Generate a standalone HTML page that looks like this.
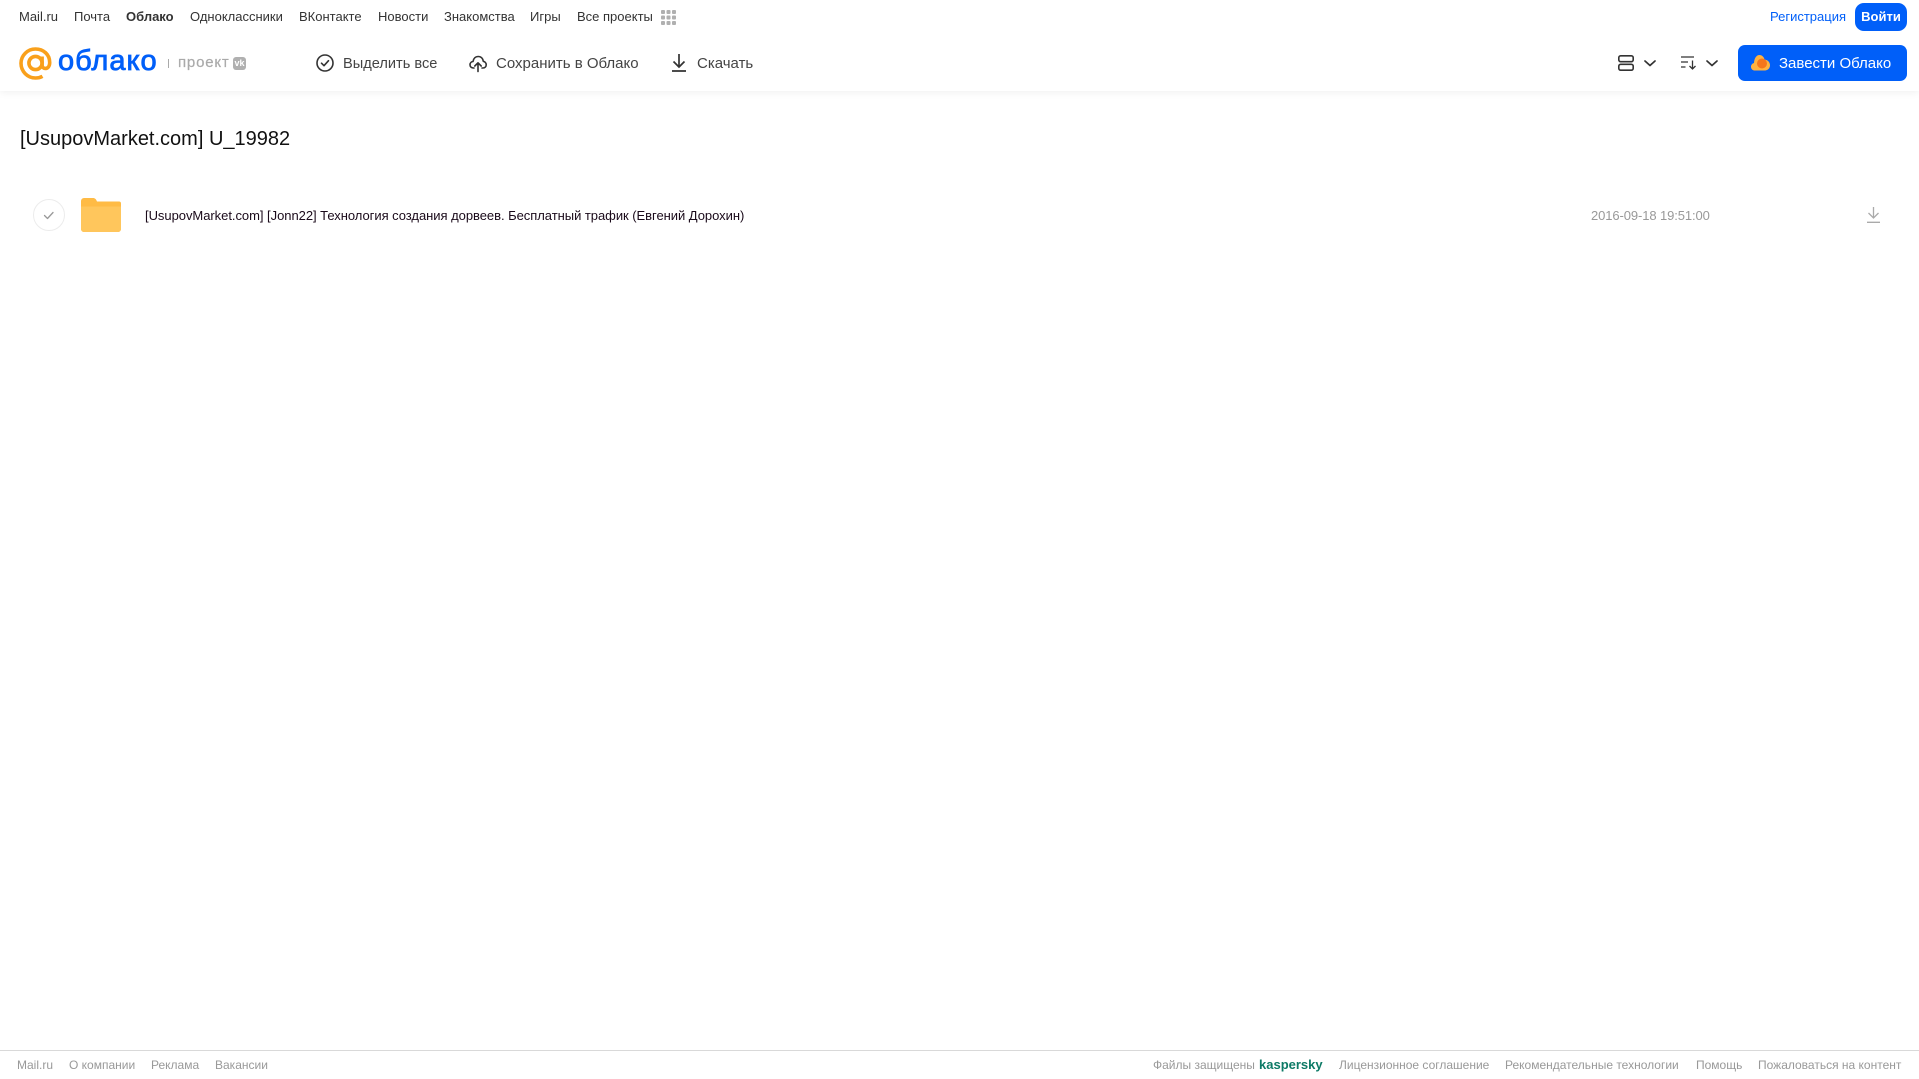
<!DOCTYPE html>
<html lang="ru"><head><meta charset="utf-8"><title>Облако</title>
<style>
html,body{margin:0;padding:0;background:#fff}
body{width:1919px;height:1079px;position:relative;overflow:hidden;font-family:"Liberation Sans",Arial,sans-serif}
.t{position:absolute;white-space:nowrap;line-height:20px;height:20px}
.n{top:7px;font-size:13px;color:#333}
.b{top:54px;font-size:15px;color:#444}
.f{top:1055px;font-size:12px;color:#999}
svg{position:absolute;display:block;overflow:visible}
#hdr{position:absolute;left:0;top:0;width:1919px;height:91px;background:#fff;box-shadow:0 1px 8px rgba(0,0,0,.07)}
#foot{position:absolute;left:0;top:1050px;width:1919px;height:1px;background:#d9d9d9}
</style></head><body>
<div id="hdr"></div>
<span class="t n" style="left:19px">Mail.ru</span>
<span class="t n" style="left:74px">Почта</span>
<span class="t n" style="left:126px;font-weight:bold">Облако</span>
<span class="t n" style="left:190px">Одноклассники</span>
<span class="t n" style="left:299px">ВКонтакте</span>
<span class="t n" style="left:378px">Новости</span>
<span class="t n" style="left:444px">Знакомства</span>
<span class="t n" style="left:530px">Игры</span>
<span class="t n" style="left:577px">Все проекты</span>
<svg style="left:661px;top:10px" width="15" height="15" fill="#b0b0b0"><rect width="4" height="4" rx="1"/><rect x="5.500" width="4" height="4" rx="1"/><rect x="11" width="4" height="4" rx="1"/><rect y="5.500" width="4" height="4" rx="1"/><rect x="5.500" y="5.500" width="4" height="4" rx="1"/><rect x="11" y="5.500" width="4" height="4" rx="1"/><rect y="11" width="4" height="4" rx="1"/><rect x="5.500" y="11" width="4" height="4" rx="1"/><rect x="11" y="11" width="4" height="4" rx="1"/></svg>
<span class="t n" style="left:1770px;color:#005ff9">Регистрация</span>
<div style="position:absolute;left:1855px;top:3px;width:52px;height:28px;border-radius:9px;background:#005ff9;color:#fff;font-size:13px;font-weight:bold;line-height:28px;text-align:center">Войти</div>

<svg style="left:19px;top:47px" width="33" height="33" viewBox="0 0 33 33" fill="none" stroke="#f9a01b" stroke-width="3.600"><circle cx="16.500" cy="16" r="6.600"/><path d="M23.100 9.500v8.500c0 5 7.600 5 7.600-2.500C30.700 7.500 24.500 2 16.500 2 8.500 2 2 8.500 2 16.300 2 24.500 8.500 31 16.500 31c2.800 0 5-.6 7-1.700"/></svg>
<span class="t" style="left:58px;top:43px;height:36px;line-height:36px;font-size:29px;color:#005ff9;letter-spacing:1px;-webkit-text-stroke:.8px #005ff9">облако</span>
<div style="position:absolute;left:168px;top:59px;width:1px;height:9px;background:#aaa"></div>
<span class="t" style="left:178px;top:53px;font-size:15px;color:#aaa;letter-spacing:.8px;-webkit-text-stroke:.2px #aaa">проект</span>
<div style="position:absolute;left:233px;top:57px;width:13px;height:13px;border-radius:3px;background:#b0b0b0;color:#fff;font-size:9px;font-weight:bold;line-height:13px;text-align:center">vk</div>

<svg style="left:316px;top:54px" width="18" height="18" fill="none" stroke="#333" stroke-width="1.600"><circle cx="9" cy="9" r="8"/><path d="M5.500 9.200l2.500 2.500 4.500-5" stroke-linecap="round" stroke-linejoin="round"/></svg>
<span class="t b" style="left:343px;font-size:14.600px">Выделить все</span>
<svg style="left:469px;top:54px" width="18" height="18" fill="none" stroke="#333" stroke-width="1.600" stroke-linecap="round" stroke-linejoin="round"><path d="M5 14H4.500C2.300 14 1 12.500 1 10.800 1 9 2.300 7.700 4 7.500 4.500 4.500 6.500 2.500 9.300 2.500c2.700 0 4.700 2 5 4.800 1.700.3 2.900 1.700 2.900 3.500 0 1.800-1.300 3.200-3.200 3.200H13"/><path d="M9 17.500V9M5.800 12L9 8.800l3.200 3.200"/></svg>
<span class="t b" style="left:496px">Сохранить в Облако</span>
<svg style="left:672px;top:54px" width="14" height="18" fill="none" stroke="#333" stroke-width="1.700"><path d="M7 0v12.500M1.500 7.500L7 13l5.500-5.500M0 17h14"/></svg>
<span class="t b" style="left:697px">Скачать</span>

<svg style="left:1618px;top:55px" width="16" height="16" fill="none" stroke="#333" stroke-width="1.600"><rect x=".8" y=".8" width="14.400" height="5.900" rx="1.800"/><rect x=".8" y="9.300" width="14.400" height="5.900" rx="1.800"/></svg>
<svg style="left:1644px;top:60px" width="12" height="7" fill="none" stroke="#333" stroke-width="1.700" stroke-linecap="round" stroke-linejoin="round"><path d="M1 1l5 4.500L11 1"/></svg>
<svg style="left:1681px;top:56px" width="16" height="14" fill="none" stroke="#333" stroke-width="1.300"><path d="M0 1h13M0 6h7M0 11h4.500M11.500 4.500V13M8.500 10l3 3 3-3"/></svg>
<svg style="left:1706px;top:60px" width="12" height="7" fill="none" stroke="#333" stroke-width="1.700" stroke-linecap="round" stroke-linejoin="round"><path d="M1 1l5 4.500L11 1"/></svg>
<div style="position:absolute;left:1738px;top:45px;width:169px;height:36px;border-radius:7px;background:#005ff9"></div>
<svg style="left:1751px;top:54px" width="19" height="17"><path d="M4 16.500C1.500 16.500 0 14.800 0 12.700 0 10.800 1.200 9.500 3 9 3.300 4 5.500 1 8.500 1c2.500 0 4.500 2 5 4.500 3 .3 5.500 2.500 5.500 5.800 0 3-2.300 5.200-5 5.200z" fill="#ffb23f"/><circle cx="11" cy="9.500" r="5" fill="#f5761c"/></svg>
<span class="t b" style="left:1779px;color:#fff">Завести Облако</span>

<span class="t" style="left:20px;top:127px;height:24px;line-height:24px;font-size:20px;color:#111">[UsupovMarket.com] U_19982</span>

<svg style="left:33px;top:199px" width="32" height="32" fill="none"><circle cx="16" cy="16" r="15.500" stroke="#ececec"/><path d="M11.500 16.500l3 3 5.500-6" stroke="#999" stroke-width="1.300" stroke-linecap="round" stroke-linejoin="round"/></svg>
<svg style="left:81px;top:198px" width="40" height="34"><path d="M0 3a3 3 0 0 1 3-3h9c2 0 3 1 4 3.500H38a2 2 0 0 1 2 2V31a3 3 0 0 1-3 3H3a3 3 0 0 1-3-3z" fill="#ffbb45"/><path d="M0 8.500H40V31a3 3 0 0 1-3 3H3a3 3 0 0 1-3-3z" fill="#ffc65c"/></svg>
<span class="t" style="left:145px;top:206px;font-size:13px;letter-spacing:-.04px;color:#1a0a1a">[UsupovMarket.com] [Jonn22] Технология создания дорвеев. Бесплатный трафик (Евгений Дорохин)</span>
<span class="t" style="left:1591px;top:206px;font-size:13px;letter-spacing:-.1px;color:#999">2016-09-18 19:51:00</span>
<svg style="left:1867px;top:207px" width="13" height="16" fill="none" stroke="#aaa" stroke-width="1.300"><path d="M6.500 0v10.500M1.500 6l5 5 5-5M0 15.300h13"/></svg>

<div id="foot"></div>
<span class="t f" style="left:17px">Mail.ru</span>
<span class="t f" style="left:69px">О компании</span>
<span class="t f" style="left:151px">Реклама</span>
<span class="t f" style="left:215px">Вакансии</span>
<span class="t f" style="left:1153px">Файлы защищены</span>
<span class="t" style="left:1259px;top:1055px;font-size:13px;font-weight:bold;color:#0d7a66">kaspersky</span>
<span class="t f" style="left:1339px">Лицензионное соглашение</span>
<span class="t f" style="left:1505px">Рекомендательные технологии</span>
<span class="t f" style="left:1696px">Помощь</span>
<span class="t f" style="left:1758px">Пожаловаться на контент</span>
</body></html>
